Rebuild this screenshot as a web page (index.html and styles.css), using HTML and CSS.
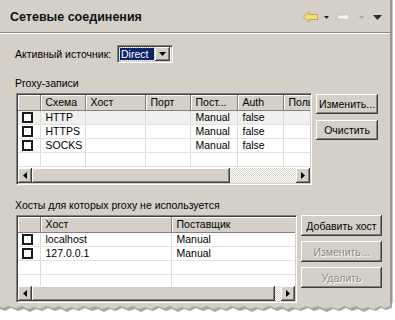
FILE: index.html
```html
<!DOCTYPE html>
<html lang="ru">
<head>
<meta charset="utf-8">
<title>Сетевые соединения</title>
<link rel="stylesheet" href="styles.css">
</head>
<body>
<div class="sheet">
  <div class="panel">
    <header class="title-bar">
      <h1 class="title">Сетевые соединения</h1>
      <nav class="nav">
        <svg class="ico-back" width="15" height="12" viewBox="0 0 15 12"><path d="M0.5 6 L6 0.8 L6 3.5 L14.5 3.5 L14.5 8.5 L6 8.5 L6 11.2 Z" fill="#f7dc86" stroke="#c9a24a" stroke-width="1"/></svg>
        <svg class="ico-tri" width="5" height="3" viewBox="0 0 5 3"><path d="M0 0 H5 L2.5 3 Z" fill="#202020"/></svg>
        <svg class="ico-fwd" width="13" height="10" viewBox="0 0 13 10"><path d="M12.5 5 L8 0.8 L8 3 L0.5 3 L0.5 7 L8 7 L8 9.2 Z" fill="#f4f3f0" stroke="#c8c6c0" stroke-width="1"/></svg>
        <svg class="ico-tri2" width="5" height="3" viewBox="0 0 5 3"><path d="M0 0 H5 L2.5 3 Z" fill="#a8a6a0"/></svg>
        <svg class="ico-menu" width="9" height="5" viewBox="0 0 9 5"><path d="M0 0 H9 L4.5 5 Z" fill="#2a2a30"/></svg>
      </nav>
    </header>

    <div class="content">
      <div class="source-row">
        <span class="label">Активный источник:</span>
        <div class="combo">
          <span class="combo-value">Direct</span>
          <span class="combo-btn"><svg width="7" height="4" viewBox="0 0 7 4"><path d="M0 0 H7 L3.5 4 Z" fill="#000"/></svg></span>
        </div>
      </div>

      <div class="group-label">Proxy-записи</div>
      <div class="section">
        <div class="grid grid-proxy">
          <div class="grid-data">
            <table class="tbl">
              <colgroup><col class="c-chk"><col style="width:45px"><col style="width:60px"><col style="width:45px"><col style="width:47px"><col style="width:46px"><col style="width:27px"></colgroup>
              <thead><tr><th></th><th>Схема</th><th>Хост</th><th>Порт</th><th>Пост...</th><th>Auth</th><th>Поль</th></tr></thead>
              <tbody>
                <tr class="first"><td><span class="chk"></span></td><td>HTTP</td><td></td><td></td><td>Manual</td><td>false</td><td></td></tr>
                <tr><td><span class="chk"></span></td><td>HTTPS</td><td></td><td></td><td>Manual</td><td>false</td><td></td></tr>
                <tr><td><span class="chk"></span></td><td>SOCKS</td><td></td><td></td><td>Manual</td><td>false</td><td></td></tr>
                <tr><td></td><td></td><td></td><td></td><td></td><td></td><td></td></tr>
              </tbody>
            </table>
          </div>
          <div class="hscroll">
            <span class="sb-btn"><svg width="4" height="7" viewBox="0 0 4 7"><path d="M4 0 V7 L0 3.5 Z" fill="#000"/></svg></span>
            <span class="sb-thumb thumb-proxy"></span>
            <span class="sb-track"></span>
            <span class="sb-btn"><svg width="4" height="7" viewBox="0 0 4 7"><path d="M0 0 V7 L4 3.5 Z" fill="#000"/></svg></span>
          </div>
        </div>
        <div class="buttons buttons-proxy">
          <button class="btn">Изменить...</button>
          <button class="btn">Очистить</button>
        </div>
      </div>

      <div class="group-label group-label-2">Хосты для которых proxy не используется</div>
      <div class="section">
        <div class="grid grid-hosts">
          <div class="grid-data">
            <table class="tbl">
              <colgroup><col class="c-chk"><col style="width:131px"><col style="width:124px"></colgroup>
              <thead><tr><th></th><th>Хост</th><th>Поставщик</th></tr></thead>
              <tbody>
                <tr><td><span class="chk"></span></td><td>localhost</td><td>Manual</td></tr>
                <tr><td><span class="chk"></span></td><td>127.0.0.1</td><td>Manual</td></tr>
                <tr><td></td><td></td><td></td></tr>
                <tr><td></td><td></td><td></td></tr>
              </tbody>
            </table>
          </div>
          <div class="hscroll">
            <span class="sb-btn"><svg width="4" height="7" viewBox="0 0 4 7"><path d="M4 0 V7 L0 3.5 Z" fill="#000"/></svg></span>
            <span class="sb-thumb thumb-hosts"></span>
            <span class="sb-track"></span>
            <span class="sb-btn"><svg width="4" height="7" viewBox="0 0 4 7"><path d="M0 0 V7 L4 3.5 Z" fill="#000"/></svg></span>
          </div>
        </div>
        <div class="buttons buttons-hosts">
          <button class="btn">Добавить хост</button>
          <button class="btn" disabled>Изменить...</button>
          <button class="btn" disabled>Удалить</button>
        </div>
      </div>
    </div>
  </div>
  <svg class="torn" width="392" height="14" viewBox="0 0 392 14" preserveAspectRatio="none">
    <path d="M0 0 H392 V5 L386 7 L381 5 L376 8 L370 6 L364 9 L358 6 L352 8 L346 5 L340 8 L333 6 L327 9 L320 6 L314 8 L308 5 L301 8 L295 6 L289 9 L283 6 L277 8 L271 5 L264 8 L258 6 L252 9 L246 6 L240 8 L233 5 L227 8 L221 6 L215 9 L209 6 L203 8 L196 5 L190 8 L184 6 L178 9 L172 6 L166 8 L159 5 L153 8 L147 6 L141 9 L135 6 L129 8 L122 5 L116 8 L110 6 L104 9 L98 6 L92 8 L85 5 L79 8 L73 6 L67 9 L61 6 L55 8 L48 5 L42 8 L36 6 L30 9 L24 6 L18 8 L11 5 L5 8 L0 6 Z" fill="#8c8a86" opacity="0.75"/>
    <path d="M0 0 H390 V3 L385 5 L380 3 L374 6 L368 4 L362 6 L356 3 L350 5 L344 3 L338 6 L331 4 L325 6 L318 3 L312 5 L306 3 L299 6 L293 4 L287 6 L281 3 L275 5 L269 3 L262 6 L256 4 L250 6 L244 3 L238 5 L231 3 L225 6 L219 4 L213 6 L207 3 L201 5 L194 3 L188 6 L182 4 L176 6 L170 3 L164 5 L157 3 L151 6 L145 4 L139 6 L133 3 L127 5 L120 3 L114 6 L108 4 L102 6 L96 3 L90 5 L83 3 L77 6 L71 4 L65 6 L59 3 L53 5 L46 3 L40 6 L34 4 L28 6 L22 3 L16 5 L9 3 L3 5 L0 4 Z" fill="#d4d0c8"/>
  </svg>
</div>
</body>
</html>
```

FILE: styles.css
```css
* { box-sizing: border-box; }

html, body {
  margin: 0;
  padding: 0;
  background: #ffffff;
}

body {
  font-family: "Liberation Sans", Arial, sans-serif;
  font-size: 10.5px;
  color: #000;
}

.sheet {
  width: 395px;
}

.panel {
  width: 390px;
  height: 303px;
  background: #d4d0c8;
  box-shadow: 2px 0 0 #9a978f, 3px 0 0 #c9c7c2;
  overflow: hidden;
}

.title-bar {
  height: 33px;
  display: flex;
  align-items: center;
  justify-content: space-between;
  padding: 2px 8px 0 10px;
  border-bottom: 1px solid #8d8a84;
  box-shadow: 0 1px 0 #ffffff;
}

.title {
  margin: 0;
  font-family: "Liberation Sans", Arial, sans-serif;
  font-size: 12.5px;
  font-weight: bold;
  color: #111;
}

.nav {
  display: flex;
  align-items: center;
}

.ico-back { margin-right: 6px; }
.ico-tri { margin-right: 8px; }
.ico-fwd { margin-right: 9px; }
.ico-tri2 { margin-right: 9px; }

.content {
  padding: 12px 0 0 15px;
}

.source-row {
  display: flex;
  align-items: center;
  height: 17px;
}

.source-row .label {
  width: 102px;
}

.combo {
  width: 56px;
  height: 18px;
  display: flex;
  align-items: center;
  background: #fff;
  border-top: 1px solid #808080;
  border-left: 1px solid #808080;
  border-right: 1px solid #fff;
  border-bottom: 1px solid #fff;
  box-shadow: inset 1px 1px 0 #404040, inset -1px -1px 0 #d4d0c8;
  padding: 2px;
}

.combo-value {
  flex: 1;
  height: 12px;
  line-height: 12px;
  background: #0a246a;
  color: #fff;
  padding-left: 1px;
  margin-right: 1px;
  outline: 1px dotted #c0c0c0;
}

.combo-btn {
  width: 15px;
  height: 14px;
  display: flex;
  align-items: center;
  justify-content: center;
  background: #d4d0c8;
  box-shadow: inset -1px -1px 0 #404040, inset 1px 1px 0 #fff, inset -2px -2px 0 #808080;
}

.group-label {
  margin-top: 15px;
  height: 13px;
  line-height: 13px;
}

.group-label-2 {
  margin-top: 14px;
}

.section {
  display: flex;
  align-items: flex-start;
  margin-top: 3px;
  margin-left: 1px;
}

.grid {
  display: flex;
  flex-direction: column;
  border-top: 1px solid #808080;
  border-left: 1px solid #808080;
  border-right: 1px solid #fff;
  border-bottom: 1px solid #fff;
  box-shadow: inset 1px 1px 0 #404040, inset -1px -1px 0 #d4d0c8;
  padding: 1px;
  background: #fff;
}

.grid-proxy { width: 296px; height: 92px; }
.grid-hosts { width: 281px; height: 88px; }

.grid-data {
  flex: 1;
  overflow: hidden;
}

.tbl {
  border-collapse: collapse;
  table-layout: fixed;
  width: 100%;
  font-size: 10.5px;
}

.c-chk { width: 22px; }

.tbl th {
  height: 15px;
  padding: 0 0 0 5px;
  text-align: left;
  font-weight: normal;
  white-space: nowrap;
  overflow: hidden;
  background: #d4d0c8;
  border-right: 1px solid #808080;
  border-bottom: 1px solid #808080;
  box-shadow: inset 1px 1px 0 #fff;
  line-height: 13px;
}

.tbl td {
  height: 14px;
  padding: 0 0 0 5px;
  white-space: nowrap;
  overflow: hidden;
  border-right: 1px solid #dedcd8;
  border-bottom: 1px solid #e4e2de;
  line-height: 13px;
}

.tbl td:first-child {
  padding: 0 0 0 4px;
}

.tbl tr.first td {
  background: #f1f0ee;
}

.chk {
  display: block;
  width: 11px;
  height: 11px;
  border: 2px solid #1a1a1a;
  background: #fff;
}

.hscroll {
  display: flex;
  height: 15px;
  flex-shrink: 0;
}

.sb-btn {
  width: 14px;
  height: 15px;
  flex-shrink: 0;
  display: flex;
  align-items: center;
  justify-content: center;
  background: #d4d0c8;
  box-shadow: inset -1px -1px 0 #404040, inset 1px 1px 0 #fff, inset -2px -2px 0 #808080;
}

.sb-thumb {
  height: 15px;
  flex-shrink: 0;
  background: #d4d0c8;
  box-shadow: inset -1px -1px 0 #404040, inset 1px 1px 0 #fff, inset -2px -2px 0 #808080;
}

.thumb-proxy { width: 198px; }
.thumb-hosts { width: 243px; }

.sb-track {
  flex: 1;
  height: 15px;
  background-color: #ebe9e4;
  background-image: repeating-conic-gradient(#ffffff 0 25%, #d4d0c8 0 50%);
  background-size: 2px 2px;
  opacity: 0.95;
}

.buttons {
  display: flex;
  flex-direction: column;
}

.buttons-proxy {
  width: 62px;
  margin-left: 4px;
  margin-top: 1px;
  gap: 6px;
}

.buttons-proxy .btn { height: 20px; }

.buttons-hosts {
  width: 81px;
  margin-left: 4px;
  gap: 5px;
}

.buttons-hosts .btn { height: 21px; }

.btn {
  font-family: "Liberation Sans", Arial, sans-serif;
  font-size: 10.5px;
  color: #000;
  background: #d4d0c8;
  border: none;
  padding: 0;
  box-shadow: inset -1px -1px 0 #404040, inset 1px 1px 0 #fff, inset -2px -2px 0 #808080;
}

.btn:disabled {
  color: #8a8880;
  text-shadow: 1px 1px 0 #fff;
}

.torn {
  display: block;
}
```
